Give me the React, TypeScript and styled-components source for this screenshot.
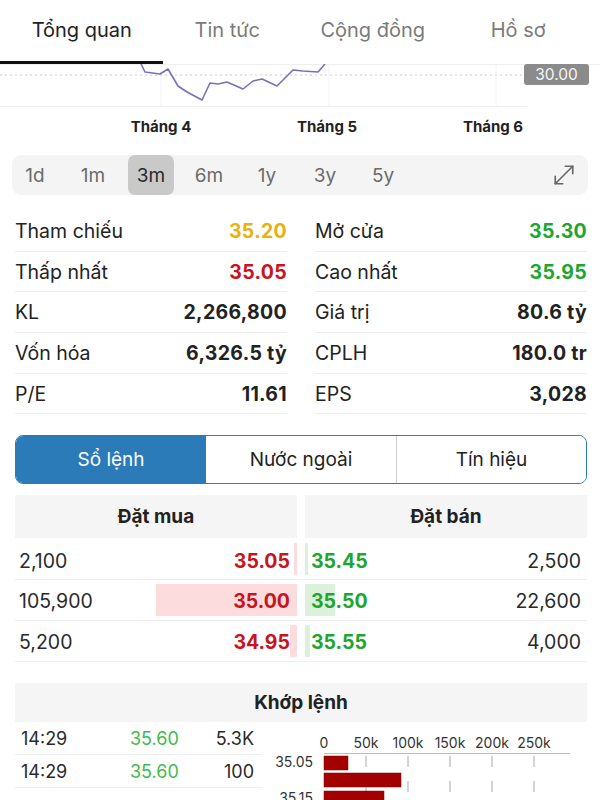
import React from "react";
import styled, { createGlobalStyle } from "styled-components";
import { MoveDiagonal } from "lucide-react";

const GlobalStyle = createGlobalStyle`
	html, body {
		margin: 0;
		padding: 0;
		background: #fff;
	}
	body {
		font-family: Inter, "Noto Sans", sans-serif;
		color: #222;
		-webkit-font-smoothing: antialiased;
	}
	* {
		box-sizing: border-box;
	}
`;

const tabs = ["Tổng quan", "Tin tức", "Cộng đồng", "Hồ sơ"];
const ranges = ["1d", "1m", "3m", "6m", "1y", "3y", "5y"];
const months = ["Tháng 4", "Tháng 5", "Tháng 6"];

const stats = [
	[
		{ label: "Tham chiếu", value: "35.20", tone: "ref" },
		{ label: "Mở cửa", value: "35.30", tone: "up" },
	],
	[
		{ label: "Thấp nhất", value: "35.05", tone: "down" },
		{ label: "Cao nhất", value: "35.95", tone: "up" },
	],
	[
		{ label: "KL", value: "2,266,800", tone: "" },
		{ label: "Giá trị", value: "80.6 tỷ", tone: "" },
	],
	[
		{ label: "Vốn hóa", value: "6,326.5 tỷ", tone: "" },
		{ label: "CPLH", value: "180.0 tr", tone: "" },
	],
	[
		{ label: "P/E", value: "11.61", tone: "" },
		{ label: "EPS", value: "3,028", tone: "" },
	],
];

const orders = [
	{ buyVol: 2100, buyPrice: "35.05", sellPrice: "35.45", sellVol: 2500 },
	{ buyVol: 105900, buyPrice: "35.00", sellPrice: "35.50", sellVol: 22600 },
	{ buyVol: 5200, buyPrice: "34.95", sellPrice: "35.55", sellVol: 4000 },
];

const trades = [
	{ time: "14:29", price: "35.60", vol: "5.3K" },
	{ time: "14:29", price: "35.60", vol: "100" },
];

const linePoints = [
	[141, 64], [145, 72], [160, 74], [168, 69], [178, 86], [187, 92], [202, 100],
	[210, 83], [218, 84], [227, 82], [243, 89], [253, 81], [262, 79], [277, 86],
	[293, 70], [303, 71], [318, 72], [325, 64],
];

const toneColor = (tone: string) => {
	if (tone === "ref") return "#e8b10e";
	if (tone === "up") return "#1ea62f";
	if (tone === "down") return "#c8141e";
	return "#222";
};

const fmt = (n: number) => n.toLocaleString("en-US");
const barWidth = (vol: number) => (vol * 141) / 105900;

const App = () => {
	return (
		<Page>
			<GlobalStyle />
			<TopTabs>
				{tabs.map((t, i) => (
					<TopTab key={t} $active={i === 0}>
						{t}
					</TopTab>
				))}
			</TopTabs>

			<ChartArea>
				<svg width="600" height="44" viewBox="0 64 600 44">
					<line x1="0" y1="64.5" x2="600" y2="64.5" stroke="#eeeeee" />
					{[161, 329, 496].map((x) => (
						<line key={x} x1={x} y1="64" x2={x} y2="106" stroke="#f4f4f4" />
					))}
					<line x1="0" y1="75" x2="524" y2="75" stroke="#c9c9d6" strokeDasharray="2 3" />
					<line x1="0" y1="106.5" x2="527" y2="106.5" stroke="#efefef" />
					<polyline
						points={linePoints.map((p) => p.join(",")).join(" ")}
						fill="none"
						stroke="#7a6fba"
						strokeWidth="1.6"
						strokeLinejoin="round"
					/>
				</svg>
				<PriceTag>30.00</PriceTag>
			</ChartArea>

			<MonthRow>
				{months.map((m) => (
					<span key={m}>{m}</span>
				))}
			</MonthRow>

			<RangeBar>
				{ranges.map((r) => (
					<RangeItem key={r} $active={r === "3m"}>
						{r}
					</RangeItem>
				))}
				<ExpandBtn>
					<MoveDiagonal size={30} strokeWidth={1.3} color="#666" />
				</ExpandBtn>
			</RangeBar>

			<StatsGrid>
				{stats.map((row) =>
					row.map((s) => (
						<StatRow key={s.label}>
							<span>{s.label}</span>
							<StatValue $color={toneColor(s.tone)}>{s.value}</StatValue>
						</StatRow>
					))
				)}
			</StatsGrid>

			<Segmented>
				<Segment $active>Sổ lệnh</Segment>
				<Segment>Nước ngoài</Segment>
				<Segment $divider>Tín hiệu</Segment>
			</Segmented>

			<BookHeader>
				<HeaderCell>Đặt mua</HeaderCell>
				<HeaderCell>Đặt bán</HeaderCell>
			</BookHeader>

			<OrderList>
				{orders.map((o) => (
					<OrderRow key={o.buyPrice}>
						<BuySide>
							<BuyBar style={{ width: barWidth(o.buyVol) }} />
							<Vol>{fmt(o.buyVol)}</Vol>
							<Price $color="#c8141e">{o.buyPrice}</Price>
						</BuySide>
						<SellSide>
							<SellBar style={{ width: barWidth(o.sellVol) }} />
							<Price $color="#1ea62f">{o.sellPrice}</Price>
							<Vol>{fmt(o.sellVol)}</Vol>
						</SellSide>
					</OrderRow>
				))}
			</OrderList>

			<MatchHeader>Khớp lệnh</MatchHeader>

			<MatchArea>
				<TradeList>
					{trades.map((t, i) => (
						<TradeRow key={i}>
							<TradeTime>{t.time}</TradeTime>
							<TradePrice>{t.price}</TradePrice>
							<TradeVol>{t.vol}</TradeVol>
						</TradeRow>
					))}
				</TradeList>
				<svg width="322" height="78" viewBox="265 722 322 78">
					{["0", "50k", "100k", "150k", "200k", "250k"].map((l, i) => (
						<AxisText key={l} x={324 + i * 42} y="744" textAnchor="middle" dominantBaseline="middle">
							{l}
						</AxisText>
					))}
					<line x1="324" y1="753.5" x2="570" y2="753.5" stroke="#bdbdbd" />
					{[366, 408, 450, 492, 534].map((x) => (
						<line key={x} x1={x} y1="756" x2={x} y2="800" stroke="#a8a8a8" strokeDasharray="11 14" />
					))}
					<rect x="324" y="756" width="24" height="14" fill="#a30000" stroke="#8a0000" strokeWidth="0.5" />
					<rect x="324" y="773" width="77" height="14" fill="#a30000" stroke="#8a0000" strokeWidth="0.5" />
					<rect x="324" y="791" width="60" height="14" fill="#a30000" stroke="#8a0000" strokeWidth="0.5" />
					<AxisText x="313" y="763" textAnchor="end" dominantBaseline="middle">
						35.05
					</AxisText>
					<AxisText x="313" y="799" textAnchor="end" dominantBaseline="middle">
						35.15
					</AxisText>
				</svg>
			</MatchArea>
		</Page>
	);
};

export default App;

const Page = styled.div`
	width: 600px;
	height: 800px;
	overflow: hidden;
	background: #fff;
`;

const TopTabs = styled.nav`
	display: grid;
	grid-template-columns: repeat(4, 1fr);
	padding: 0 9px;
	height: 64px;
`;

const TopTab = styled.div<{ $active?: boolean }>`
	position: relative;
	display: flex;
	justify-content: center;
	align-items: center;
	padding-bottom: 4px;
	font-size: 20px;
	color: ${(p) => (p.$active ? "#222" : "#7a7a7a")};
	&::after {
		content: "";
		display: ${(p) => (p.$active ? "block" : "none")};
		position: absolute;
		left: -9px;
		width: 163px;
		bottom: 0;
		height: 3px;
		background: #111;
	}
`;

const ChartArea = styled.div`
	position: relative;
	height: 44px;
	svg {
		display: block;
	}
`;

const PriceTag = styled.div`
	position: absolute;
	top: 0;
	right: 11px;
	width: 65px;
	height: 21px;
	border-radius: 3px;
	background: #8b8b8b;
	color: #f5f5f5;
	font-size: 15.5px;
	line-height: 21px;
	text-align: center;
`;

const MonthRow = styled.div`
	display: grid;
	grid-template-columns: repeat(3, 166px);
	padding-left: 78px;
	margin-top: 6px;
	height: 24px;
	align-items: center;
	span {
		text-align: center;
		font-size: 15px;
		font-weight: 700;
		color: #222;
	}
`;

const RangeBar = styled.div`
	display: flex;
	align-items: center;
	gap: 12px;
	height: 40px;
	margin: 17px 12px 0 12px;
	background: #f4f4f4;
	border-radius: 9px;
`;

const RangeItem = styled.div<{ $active?: boolean }>`
	width: 46px;
	height: 40px;
	display: flex;
	justify-content: center;
	align-items: center;
	border-radius: 7px;
	font-size: 19px;
	color: ${(p) => (p.$active ? "#2a2a2a" : "#6b6b6b")};
	background: ${(p) => (p.$active ? "#c9c9c9" : "transparent")};
`;

const ExpandBtn = styled.div`
	margin-left: auto;
	margin-right: 9px;
	display: flex;
	align-items: center;
`;

const StatsGrid = styled.div`
	display: grid;
	grid-template-columns: 1fr 1fr;
	column-gap: 28px;
	padding: 0 13px 0 15px;
	margin-top: 16px;
`;

const StatRow = styled.div`
	display: flex;
	justify-content: space-between;
	align-items: center;
	height: 40.7px;
	border-bottom: 1px solid #ededed;
	font-size: 19.5px;
	color: #222;
`;

const StatValue = styled.span<{ $color: string }>`
	font-weight: 700;
	letter-spacing: 0.3px;
	color: ${(p) => p.$color};
`;

const Segmented = styled.div`
	display: grid;
	grid-template-columns: repeat(3, 1fr);
	height: 49px;
	margin: 21px 13px 0 15px;
	border: 1.5px solid #2a7bb8;
	border-radius: 8px;
	overflow: hidden;
`;

const Segment = styled.div<{ $active?: boolean; $divider?: boolean }>`
	display: flex;
	justify-content: center;
	align-items: center;
	font-size: 19px;
	background: ${(p) => (p.$active ? "#2b7bb9" : "#fff")};
	color: ${(p) => (p.$active ? "#fff" : "#222")};
	border-left: ${(p) => (p.$divider ? "1px solid #cfcfcf" : "none")};
`;

const BookHeader = styled.div`
	display: grid;
	grid-template-columns: 1fr 1fr;
	column-gap: 8px;
	margin: 11px 13px 0 15px;
`;

const HeaderCell = styled.div`
	height: 43px;
	display: flex;
	justify-content: center;
	align-items: center;
	background: #f5f5f5;
	font-size: 19px;
	font-weight: 700;
`;

const OrderList = styled.div`
	margin: 1px 13px 0 15px;
`;

const OrderRow = styled.div`
	display: grid;
	grid-template-columns: 1fr 1fr;
	column-gap: 8px;
	height: 40.7px;
	padding-top: 3px;
	border-bottom: 1px solid #eeeeee;
`;

const Side = styled.div`
	position: relative;
	display: flex;
	justify-content: space-between;
	align-items: center;
	font-size: 19.5px;
	span {
		position: relative;
	}
`;

const BuySide = styled(Side)`
	padding: 0 7px 0 4px;
`;

const SellSide = styled(Side)`
	padding: 0 6px 0 6px;
`;

const BuyBar = styled.div`
	position: absolute;
	top: 1px;
	bottom: 4px;
	right: 0;
	background: #fcdcdc;
`;

const SellBar = styled.div`
	position: absolute;
	top: 1px;
	bottom: 4px;
	left: 0;
	background: #dcf1dc;
`;

const Vol = styled.span`
	color: #2a2a2a;
`;

const Price = styled.span<{ $color: string }>`
	font-weight: 700;
	color: ${(p) => p.$color};
`;

const MatchHeader = styled.div`
	height: 39px;
	margin: 21px 13px 0 15px;
	display: flex;
	justify-content: center;
	align-items: center;
	background: #f5f5f5;
	font-size: 19px;
	font-weight: 700;
`;

const MatchArea = styled.div`
	display: grid;
	grid-template-columns: 247px 1fr;
	column-gap: 3px;
	padding-left: 15px;
	svg {
		display: block;
	}
`;

const TradeList = styled.div`
	display: flex;
	flex-direction: column;
`;

const TradeRow = styled.div`
	display: flex;
	align-items: center;
	height: 33px;
	padding-top: 2px;
	border-bottom: 1px solid #eeeeee;
	font-size: 18px;
`;

const TradeTime = styled.span`
	width: 115px;
	padding-left: 6px;
	color: #2a2a2a;
`;

const TradePrice = styled.span`
	color: #3fba4f;
`;

const TradeVol = styled.span`
	flex: 1;
	text-align: right;
	padding-right: 8px;
	color: #2a2a2a;
`;

const AxisText = styled.text`
	font-family: Inter, "Noto Sans", sans-serif;
	font-size: 14px;
	fill: #333;
`;
